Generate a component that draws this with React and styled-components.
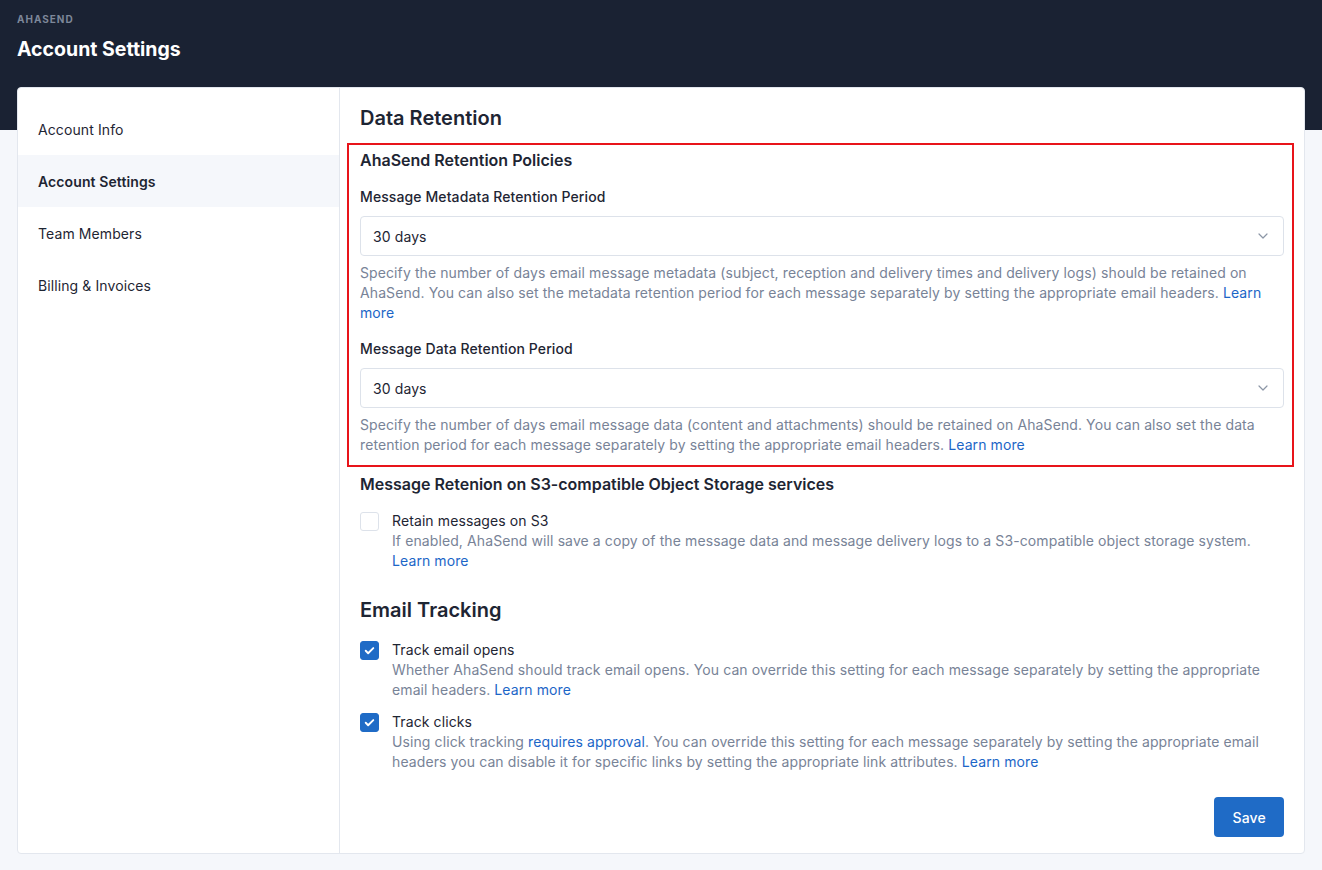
import React from "react";
import styled, { createGlobalStyle } from "styled-components";

const GlobalStyle = createGlobalStyle`
  html, body {
    margin: 0;
    padding: 0;
    background: #f5f7fb;
    font-family: Inter, "Noto Sans", sans-serif;
    color: #1e2533;
  }
  * { box-sizing: border-box; }
`;

const Page = styled.div`
  min-height: 870px;
  background: linear-gradient(#1a2233 0, #1a2233 130px, #f5f7fb 130px);
  padding: 0 17px 17px;
`;

const Header = styled.header`
  padding-top: 13px;
  height: 87px;
`;

const Brand = styled.div`
  font-size: 10px;
  font-weight: 700;
  letter-spacing: 1px;
  color: #7d8799;
  text-transform: uppercase;
  line-height: 12px;
`;

const Title = styled.h1`
  margin: 11px 0 0;
  font-size: 19.5px;
  font-weight: 700;
  color: #fff;
  line-height: 26px;
`;

const Card = styled.div`
  display: flex;
  background: #fff;
  border: 1px solid #e3e7ee;
  border-radius: 4px;
  min-height: 766px;
`;

const Sidebar = styled.nav`
  width: 322px;
  flex-shrink: 0;
  border-right: 1px solid #e3e7ee;
  padding-top: 15px;
`;

const NavItem = styled.div`
  height: 52px;
  display: flex;
  align-items: center;
  padding-left: 20px;
  font-size: 14px;
  letter-spacing: 0.1px;
  font-weight: ${(p) => (p.$active ? 600 : 400)};
  background: ${(p) => (p.$active ? "#f5f7fb" : "transparent")};
  color: #1e2533;
`;

const Main = styled.main`
  flex: 1;
  padding: 16px 20px 16px;
  display: flex;
  flex-direction: column;
  letter-spacing: 0.1px;
`;

const SectionTitle = styled.h2`
  margin: ${(p) => p.$top || 0}px 0 0;
  font-size: 20px;
  font-weight: 600;
  line-height: 28px;
  letter-spacing: 0;
  color: #1e2533;
`;

const Highlight = styled.section`
  margin: 11px -10px 0 -13px;
  padding: 3px 8px 10px 11px;
  border: 2px solid #e8141a;
`;

const SubTitle = styled.h3`
  margin: ${(p) => p.$top || 0}px 0 0;
  font-size: 16px;
  font-weight: 600;
  line-height: 24px;
  letter-spacing: 0;
  color: #1e2533;
`;

const Label = styled.div`
  margin-top: ${(p) => p.$top || 14}px;
  font-size: 14px;
  font-weight: 500;
  line-height: 20px;
`;

const Select = styled.div`
  margin-top: 9px;
  height: 40px;
  border: 1px solid #dde2ea;
  border-radius: 4px;
  display: flex;
  align-items: center;
  justify-content: space-between;
  padding: 0 12px 0 12px;
  font-size: 14px;
  color: #1e2533;
  svg { color: #8c96a6; }
`;

const Help = styled.p`
  margin: ${(p) => p.$top ?? 7}px 0 0;
  font-size: 14px;
  line-height: 20px;
  color: #788397;
`;

const Link = styled.a`
  color: #1c66c7;
  text-decoration: none;
`;

const Option = styled.div`
  display: flex;
  gap: 13px;
  margin-top: ${(p) => p.$top}px;
`;

const Box = styled.div`
  width: 19px;
  height: 19px;
  flex-shrink: 0;
  margin-top: 1px;
  border-radius: 3px;
  border: 1px solid ${(p) => (p.$checked ? "#1f6bc6" : "#dde2ea")};
  background: ${(p) => (p.$checked ? "#1f6bc6" : "#fff")};
  display: flex;
  align-items: center;
  justify-content: center;
`;

const OptionText = styled.div`
  display: flex;
  flex-direction: column;
`;

const OptionLabel = styled.div`
  font-size: 14px;
  line-height: 20px;
  color: #1e2533;
`;

const Footer = styled.div`
  display: flex;
  justify-content: flex-end;
  margin-top: 25px;
`;

const SaveButton = styled.button`
  background: #1f6bc6;
  color: #fff;
  border: none;
  border-radius: 4px;
  height: 40px;
  padding: 0 18px;
  font-family: inherit;
  font-size: 14px;
  font-weight: 500;
  letter-spacing: 0.2px;
  cursor: pointer;
`;

const Chevron = () => (
  <svg width="16" height="16" viewBox="0 0 24 24" fill="none" stroke="currentColor" strokeWidth="1.8" strokeLinecap="round" strokeLinejoin="round">
    <path d="M6 9l6 6 6-6" />
  </svg>
);

const Check = () => (
  <svg width="13" height="13" viewBox="0 0 24 24" fill="none" stroke="#fff" strokeWidth="3.5" strokeLinecap="round" strokeLinejoin="round">
    <path d="M5 12.5l4.5 4.5L19 7.5" />
  </svg>
);

const navItems = ["Account Info", "Account Settings", "Team Members", "Billing & Invoices"];

const Checkbox = ({ checked, label, children, top }) => (
  <Option $top={top}>
    <Box $checked={checked}>{checked && <Check />}</Box>
    <OptionText>
      <OptionLabel>{label}</OptionLabel>
      <Help $top={0}>{children}</Help>
    </OptionText>
  </Option>
);

export default function App() {
  return (
    <>
      <GlobalStyle />
      <Page>
        <Header>
          <Brand>AhaSend</Brand>
          <Title>Account Settings</Title>
        </Header>
        <Card>
          <Sidebar>
            {navItems.map((item) => (
              <NavItem key={item} $active={item === "Account Settings"}>
                {item}
              </NavItem>
            ))}
          </Sidebar>
          <Main>
            <SectionTitle>Data Retention</SectionTitle>
            <Highlight>
              <SubTitle>AhaSend Retention Policies</SubTitle>
              <Label $top={15}>Message Metadata Retention Period</Label>
              <Select>
                <span>30 days</span>
                <Chevron />
              </Select>
              <Help>
                Specify the number of days email message metadata (subject, reception and delivery times and delivery logs) should be retained on AhaSend. You can also set the metadata retention period for each message separately by setting the appropriate email headers. <Link href="#">Learn more</Link>
              </Help>
              <Label $top={16}>Message Data Retention Period</Label>
              <Select>
                <span>30 days</span>
                <Chevron />
              </Select>
              <Help>
                Specify the number of days email message data (content and attachments) should be retained on AhaSend. You can also set the data retention period for each message separately by setting the appropriate email headers. <Link href="#">Learn more</Link>
              </Help>
            </Highlight>
            <SubTitle $top={5}>Message Retenion on S3-compatible Object Storage services</SubTitle>
            <Checkbox top={15} label="Retain messages on S3">
              If enabled, AhaSend will save a copy of the message data and message delivery logs to a S3-compatible object storage system. <Link href="#">Learn more</Link>
            </Checkbox>
            <SectionTitle $top={25}>Email Tracking</SectionTitle>
            <Checkbox top={16} checked label="Track email opens">
              Whether AhaSend should track email opens. You can override this setting for each message separately by setting the appropriate email headers. <Link href="#">Learn more</Link>
            </Checkbox>
            <Checkbox top={12} checked label="Track clicks">
              Using click tracking <Link href="#">requires approval</Link>. You can override this setting for each message separately by setting the appropriate email headers you can disable it for specific links by setting the appropriate link attributes. <Link href="#">Learn more</Link>
            </Checkbox>
            <Footer>
              <SaveButton>Save</SaveButton>
            </Footer>
          </Main>
        </Card>
      </Page>
    </>
  );
}
